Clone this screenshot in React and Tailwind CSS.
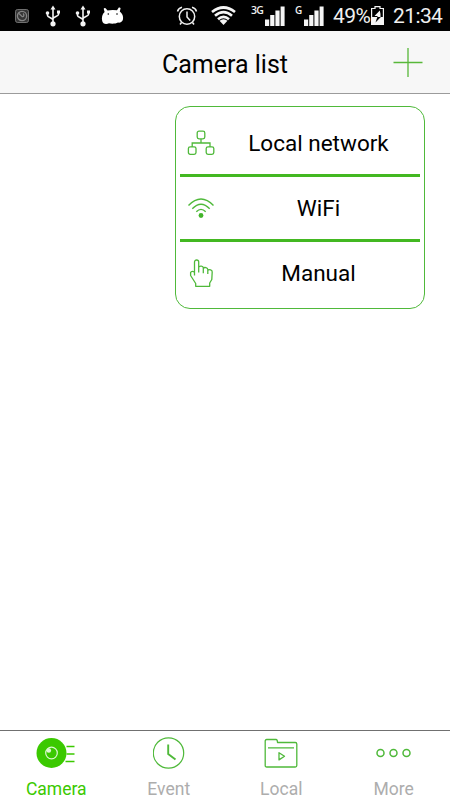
import React, { useState } from 'react';
import clsx from 'clsx';

function UsbIcon() {
  return (
    <svg width="16" height="22" viewBox="0 0 16 22" fill="none" stroke="#f4f4f4" strokeWidth="1.6">
      <path d="M8 3v15M2.5 8v2.5c0 1.6 5.500 3 5.500 4.500M13.500 7v2.500c0 1.700-5.500 2.500-5.500 4.500" />
      <path d="M8 0.500l2.500 4h-5z" fill="#f4f4f4" stroke="none" />
      <circle cx="8" cy="18.800" r="2.600" fill="#f4f4f4" stroke="none" />
      <circle cx="2.500" cy="8" r="1.800" fill="#f4f4f4" stroke="none" />
      <path d="M12 5.500h3v3h-3z" fill="#f4f4f4" stroke="none" />
    </svg>
  );
}

function SignalIcon() {
  return (
    <svg width="20" height="20" viewBox="0 0 20 20" fill="#f5f5f5">
      <path d="M0 13.500h4.200V20H0zM5.200 9h4.200v11H5.200zM10.400 4.500h4.200V20h-4.200zM15.600 0.500h4V20h-4z" />
    </svg>
  );
}

function StatusBar() {
  return (
    <div className="flex h-[31px] items-center bg-black text-[#f0f0f0]">
      <svg className="ml-[15px]" width="14" height="14" viewBox="0 0 14 14" fill="none" stroke="#858585">
        <rect x="0.500" y="0.500" width="13" height="13" rx="2" fill="#353535" strokeWidth="0.800" />
        <circle cx="7" cy="7" r="4.600" strokeWidth="1.300" />
        <path d="M4 4.500l3 3c2 .5 2.500-2 1-3" strokeWidth="1.300" />
      </svg>
      <div className="ml-4"><UsbIcon /></div>
      <div className="ml-[14px]"><UsbIcon /></div>
      <svg className="ml-[10px]" width="23" height="18" viewBox="0 0 23 18">
        <path
          d="M3.600 5L2.700 1.800Q3.500 .3 4.600 1.300L6.500 3.500Q11 2.500 16 3.300L17.800 .6Q19 0 19.600 1.200L18.800 4.500C21.500 6.500 22.500 9.500 22 12.300 21.500 15 19 16 17 15.600 14.500 17 10 17 8 16.300 5 17.800 1.800 17 1.200 14 .4 10.500 1.200 7 3.600 5z"
          fill="#fff"
        />
        <circle cx="7.300" cy="7" r="0.800" />
        <circle cx="16" cy="7" r="0.800" />
      </svg>
      <svg className="ml-[52px]" width="22" height="20" viewBox="0 0 22 20" fill="none" stroke="#f0f0f0" strokeWidth="1.500">
        <circle cx="11" cy="10.500" r="7.700" />
        <path d="M11 5.500v5.500l3.200 3.500M1.500 5.500C2 3.500 3.500 1.800 6 1.200M20.500 5.500C20 3.500 18.500 1.800 16 1.200M5.500 16.500L4 18.500M16.500 16.500l1.500 2" />
      </svg>
      <svg className="ml-[13px]" width="25" height="19" viewBox="0 0 25 19" fill="none" stroke="#f5f5f5" strokeWidth="2.700">
        <path d="M1 6Q12.500-3 24 6M4 9.700Q12.500 2.700 21 9.700M7 13.200Q12.500 8.500 18 13.200" />
        <path d="M8.500 14.700Q12.500 11.700 16.500 14.700L12.500 19z" fill="#f5f5f5" stroke="none" />
      </svg>
      <span className="ml-[15px] w-[14px] pb-[11px] font-['Open_Sans',sans-serif] text-[10.500px] leading-3 font-semibold tracking-[-0.800px]">3G</span>
      <SignalIcon />
      <span className="ml-[10px] w-[9px] pb-[11px] font-['Open_Sans',sans-serif] text-[10px] leading-3 font-semibold">G</span>
      <SignalIcon />
      <span className="ml-[9px] w-[38px] pt-[2px] text-[21px] leading-none tracking-[-0.600px]">49%</span>
      <svg width="13" height="19" viewBox="0 0 13 19">
        <path d="M4 2V0.600h5V2.500h3.400v16H.6v-16H4z" fill="none" stroke="#f5f5f5" strokeWidth="1.200" />
        <path d="M.5 11h12v8H.5z" fill="#f5f5f5" />
        <path d="M8.800 4.500L3.500 10h3v1h3V8z" fill="#f5f5f5" />
        <path d="M6.300 11h3.500L4.500 16.500z" fill="#000" />
      </svg>
      <span className="ml-[9px] pt-[2px] text-[21px] leading-none tracking-[-0.600px]">21:34</span>
    </div>
  );
}

function NetworkIcon() {
  return (
    <svg width="28" height="26" viewBox="0 0 28 26" fill="none" stroke="#4fb93a" strokeWidth="1.300">
      <rect x="10.200" y="1.200" width="7.600" height="7.600" rx="1.800" />
      <rect x="1.400" y="16.800" width="7.600" height="7.600" rx="1.800" />
      <rect x="19.200" y="16.800" width="7.600" height="7.600" rx="1.800" />
      <path d="M14 9v4M5.200 17v-4h17.800v4" />
    </svg>
  );
}

function WifiIcon() {
  return (
    <svg width="28" height="22" viewBox="0 0 28 22" fill="none" stroke="#4fb93a" strokeWidth="1.400">
      <path d="M1.500 8.500Q14-4.500 26.500 8.500M5.300 11.800Q14 2.800 22.700 11.800M9.300 14.800Q14 10 18.700 14.800" />
      <circle cx="14" cy="18.500" r="2.400" fill="#42b52b" stroke="none" />
    </svg>
  );
}

function HandIcon() {
  return (
    <svg width="28" height="30" viewBox="0 0 28 30" fill="none" stroke="#4fb93a" strokeWidth="1.300" strokeLinejoin="round">
      <path d="M7.500 17.500V4C7.500 1.300 11.700 1.300 11.700 4V14.500M11.700 9.300C12.500 7.600 16.300 7.800 16.300 10V15.200M16.300 10.300C17.300 8.900 20.800 9.500 20.800 11.500V16M20.800 12.300C22.300 11 25.300 11.800 25.200 14L24.800 21.500 22.700 25V28.300H8.700V25.500L3.600 17.500V14.500C4.300 12.800 6.800 13 7.500 14.500" />
    </svg>
  );
}

function CameraIcon() {
  return (
    <svg width="40" height="32" viewBox="0 0 40 32" fill="none">
      <circle cx="15.500" cy="16" r="15" fill="#3bc900" />
      <circle cx="15.500" cy="16" r="5.800" stroke="#dcf7d0" strokeWidth="1.200" />
      <circle cx="12.800" cy="13.500" r="2.300" fill="#dcf7d0" />
      <path d="M30.500 9.400h8M30.500 17h8M29.500 24.500h9" stroke="#3bc900" strokeWidth="1.500" />
    </svg>
  );
}

function ClockIcon() {
  return (
    <svg width="32" height="32" viewBox="0 0 32 32" fill="none" stroke="#4fb93a">
      <circle cx="15.500" cy="16" r="15.200" strokeWidth="1.200" />
      <path d="M15.200 7.500v9.500l7.300 5.500" strokeWidth="1.900" />
    </svg>
  );
}

function FolderIcon() {
  return (
    <svg width="34" height="30" viewBox="0 0 34 30" fill="none" stroke="#4fb93a" strokeWidth="1.300" strokeLinejoin="round">
      <path d="M1.200 27V3Q1.200 1.500 2.700 1.500H12Q13.500 1.500 13.500 4.500H31.300Q32.800 4.500 32.800 6V27.500Q32.800 29 31.300 29H2.700Q1.200 29 1.200 27.500zM4 9.800h26" />
      <path d="M15 14.700v7.200l5.500-3.600z" />
    </svg>
  );
}

function MoreIcon() {
  return (
    <svg width="36" height="10" viewBox="0 0 36 10" fill="none" stroke="#4fb93a" strokeWidth="1.500">
      <circle cx="4.500" cy="5" r="3.500" />
      <circle cx="17.500" cy="5" r="3.500" />
      <circle cx="30.500" cy="5" r="3.500" />
    </svg>
  );
}

const menuItems = [
  { key: 'local', label: 'Local network', icon: NetworkIcon },
  { key: 'wifi', label: 'WiFi', icon: WifiIcon },
  { key: 'manual', label: 'Manual', icon: HandIcon },
];

const tabs = [
  { key: 'camera', label: 'Camera', icon: CameraIcon },
  { key: 'event', label: 'Event', icon: ClockIcon },
  { key: 'files', label: 'Local', icon: FolderIcon },
  { key: 'more', label: 'More', icon: MoreIcon },
];

export default function App() {
  const [activeTab, setActiveTab] = useState('camera');
  const [menuOpen, setMenuOpen] = useState(true);

  return (
    <div className="flex h-[800px] w-[450px] flex-col overflow-hidden bg-white font-[Roboto,sans-serif] text-black">
      <StatusBar />

      <header className="grid h-[63px] grid-cols-[80px_1fr_80px] items-center border-b border-[#9b9b9b] bg-[#f7f7f7]">
        <h1 className="col-start-2 pt-[4px] text-center text-[25px] leading-none">Camera list</h1>
        <button className="flex justify-center pr-[5px]" aria-label="Add" onClick={() => setMenuOpen(!menuOpen)}>
          <svg width="30" height="30" viewBox="0 0 30 30" stroke="#58b83a" strokeWidth="1.300">
            <path d="M15 1v29M0.500 15.500h29" />
          </svg>
        </button>
      </header>

      <main className="flex-1 pt-3 pr-[25px]">
        {menuOpen && (
          <div className="ml-auto h-[203px] w-[250px] rounded-[15px] border-[1.500px] border-[#4fb93a] px-1 pt-[5px]">
            {menuItems.map(({ key, label, icon: Icon }, i) => (
              <button
                key={key}
                className={clsx(
                  'flex w-full items-center',
                  i < menuItems.length - 1 ? 'h-[65px] border-b-3 border-[#43b821]' : 'h-[62px]'
                )}
              >
                <span className="flex w-[42px] justify-center"><Icon /></span>
                <span className="flex-1 pr-[5px] text-center text-[22.500px] leading-none">{label}</span>
              </button>
            ))}
          </div>
        )}
      </main>

      <nav className="grid h-[70px] grid-cols-4 border-t border-[#707070]">
        {tabs.map(({ key, label, icon: Icon }) => (
          <button
            key={key}
            onClick={() => setActiveTab(key)}
            className={clsx('flex flex-col items-center', activeTab === key ? 'text-[#3bc900]' : 'text-[#adadad]')}
          >
            <span className="flex h-[44px] items-center"><Icon /></span>
            <span className="pt-[5px] text-[17.500px] leading-[18px]">{label}</span>
          </button>
        ))}
      </nav>
    </div>
  );
}
